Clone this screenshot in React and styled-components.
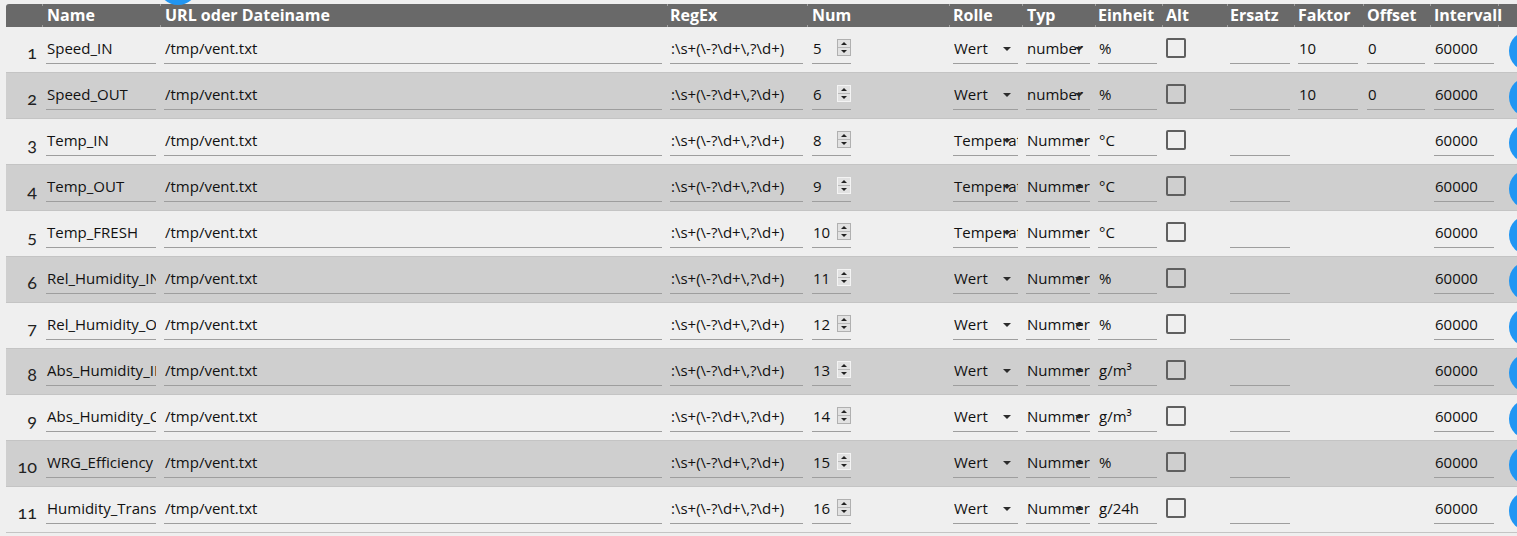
import React from 'react';
import styled, { createGlobalStyle } from 'styled-components';

const GlobalStyle = createGlobalStyle`
  body {
    margin: 0;
    background: #efefef;
    overflow: hidden;
    font-family: "Open Sans", "Noto Sans", sans-serif;
  }
`;

const COLS = '36px 118px 507px 140px 142px 73px 73px 67px 65px 67px 69px 67px 68px 60px';

const Page = styled.div`
  position: relative;
  padding: 4px 0 0 6px;
  width: 1552px;
`;

const AddButton = styled.div`
  position: absolute;
  left: 158px;
  top: -35px;
  width: 40px;
  height: 40px;
  border-radius: 50%;
  background: #2196f3;
`;

const Header = styled.div`
  display: grid;
  grid-template-columns: ${COLS};
  height: 23px;
  background: #696969;
  border-radius: 3px 0 0 0;
`;

const HeadCell = styled.div`
  position: relative;
  padding-left: ${p => p.$pad || 4}px;
  color: #fff;
  font-weight: 700;
  font-size: 16px;
  line-height: 23px;
  white-space: nowrap;

  &::before, &::after {
    content: '';
    position: absolute;
    left: 0;
    width: 1px;
    height: 2px;
    background: ${p => (p.$first ? 'transparent' : '#a0a0a0')};
  }
  &::before { top: 0; }
  &::after { bottom: 0; }
`;

const Row = styled.div`
  display: grid;
  grid-template-columns: ${COLS};
  height: 45px;
  background: ${p => (p.$even ? '#cfcfcf' : '#efefef')};
  border-bottom: 1px solid #c4c4c4;
`;

const Cell = styled.div`
  display: flex;
  align-items: center;
  padding: 0 ${p => p.$right ?? 4}px 0 ${p => p.$left ?? 4}px;
  min-width: 0;
`;

const Index = styled.div`
  padding: 3px 5px 0 0;
  text-align: right;
  font-family: "Lato", "DejaVu Serif", serif;
  font-variant-numeric: oldstyle-nums;
  font-size: 18px;
  color: #222;
  line-height: 45px;
`;

const Field = styled.div`
  position: relative;
  width: ${p => (p.$w ? `${p.$w}px` : '100%')};
  height: 26px;
  margin-bottom: 1px;
  border-bottom: 1px solid #9e9e9e;
  font-size: 15px;
  line-height: 20px;
  color: #111;
  padding-left: 1px;
  white-space: nowrap;
  overflow: hidden;
  box-sizing: border-box;
`;

const Arrow = styled.span`
  position: absolute;
  right: 7px;
  top: 9px;
  width: 0;
  height: 0;
  border-left: 4px solid transparent;
  border-right: 4px solid transparent;
  border-top: 4px solid #2b2b2b;
`;

const Spinner = styled.div`
  position: absolute;
  right: 0;
  top: 1px;
  width: 14px;
  height: 17px;
  box-sizing: border-box;
  border: 1px solid ${p => (p.$even ? '#f4f4f4' : '#b0b0b0')};
  background: #e2e2e2;
  display: flex;
  flex-direction: column;
`;

const SpinHalf = styled.div`
  flex: 1;
  display: flex;
  align-items: center;
  justify-content: center;
  border-top: ${p => (p.$down ? '1px solid #b8b8b8' : 'none')};

  &::after {
    content: '';
    width: 0;
    height: 0;
    border-left: 3px solid transparent;
    border-right: 3px solid transparent;
    ${p => (p.$down ? 'border-top: 3px solid #222;' : 'border-bottom: 3px solid #222;')}
  }
`;

const Check = styled.div`
  align-self: flex-start;
  margin: 11px 0 0 0;
  width: 20px;
  height: 20px;
  box-sizing: border-box;
  border: 2px solid #5f5f5f;
  border-radius: 2px;
`;

const Fab = styled.div`
  flex: none;
  width: 40px;
  height: 40px;
  border-radius: 50%;
  background: #2196f3;
`;

const heads = [
  ['', 4], ['Name', 5], ['URL oder Dateiname', 5], ['RegEx', 3], ['Num', 5], ['Rolle', 4],
  ['Typ', 5], ['Einheit', 3], ['Alt', 4], ['Ersatz', 3], ['Faktor', 4], ['Offset', 4],
  ['Intervall', 4], ['', 4],
];

const rows = [
  { name: 'Speed_IN', num: 5, role: 'Wert', type: 'number', unit: '%', factor: '10', offset: '0' },
  { name: 'Speed_OUT', num: 6, role: 'Wert', type: 'number', unit: '%', factor: '10', offset: '0' },
  { name: 'Temp_IN', num: 8, role: 'Temperatur', type: 'Nummer', unit: '°C' },
  { name: 'Temp_OUT', num: 9, role: 'Temperatur', type: 'Nummer', unit: '°C' },
  { name: 'Temp_FRESH', num: 10, role: 'Temperatur', type: 'Nummer', unit: '°C' },
  { name: 'Rel_Humidity_IN', num: 11, role: 'Wert', type: 'Nummer', unit: '%' },
  { name: 'Rel_Humidity_OUT', num: 12, role: 'Wert', type: 'Nummer', unit: '%' },
  { name: 'Abs_Humidity_IN', num: 13, role: 'Wert', type: 'Nummer', unit: 'g/m³' },
  { name: 'Abs_Humidity_OUT', num: 14, role: 'Wert', type: 'Nummer', unit: 'g/m³' },
  { name: 'WRG_Efficiency', num: 15, role: 'Wert', type: 'Nummer', unit: '%' },
  { name: 'Humidity_Transport', num: 16, role: 'Wert', type: 'Nummer', unit: 'g/24h' },
];

function App() {
  return (
    <Page>
      <GlobalStyle />
      <AddButton />
      <Header>
        {heads.map(([label, pad], i) => (
          <HeadCell key={i} $pad={pad} $first={i === 0}>{label}</HeadCell>
        ))}
      </Header>
      {rows.map((r, i) => {
        const even = i % 2 === 1;
        return (
          <Row key={i} $even={even}>
            <Index>{i + 1}</Index>
            <Cell><Field>{r.name}</Field></Cell>
            <Cell $right={5}><Field>/tmp/vent.txt</Field></Cell>
            <Cell $left={3}><Field>{':\\s+(\\-?\\d+\\,?\\d+)'}</Field></Cell>
            <Cell $left={5}>
              <Field $w={39}>
                {r.num}
                <Spinner $even={even}>
                  <SpinHalf />
                  <SpinHalf $down />
                </Spinner>
              </Field>
            </Cell>
            <Cell><Field>{r.role}<Arrow /></Field></Cell>
            <Cell $right={5}><Field>{r.type}<Arrow /></Field></Cell>
            <Cell $left={3} $right={5}><Field>{r.unit}</Field></Cell>
            <Cell><Check /></Cell>
            <Cell $left={3}><Field /></Cell>
            <Cell $right={5}>{r.factor && <Field>{r.factor}</Field>}</Cell>
            <Cell $right={5}>{r.offset && <Field>{r.offset}</Field>}</Cell>
            <Cell><Field>60000</Field></Cell>
            <Cell $left={11}><Fab /></Cell>
          </Row>
        );
      })}
    </Page>
  );
}

export default App;
